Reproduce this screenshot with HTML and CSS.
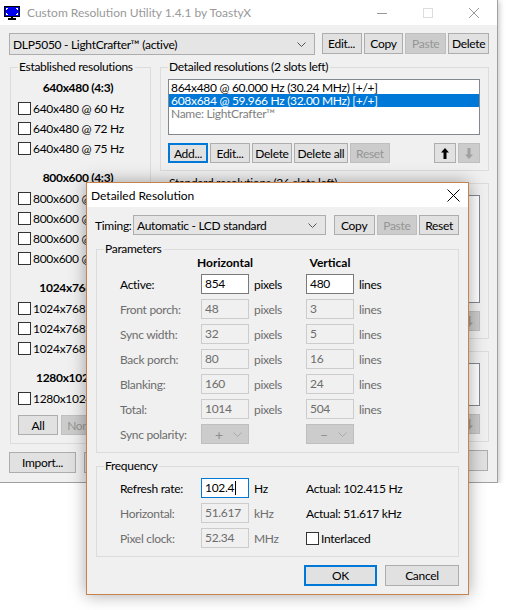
FILE: index.html
```html
<!DOCTYPE html>
<html lang="en">
<head>
    <meta charset="UTF-8">
    <meta name="viewport" content="width=device-width, initial-scale=1.0">
    <title>Custom Resolution Utility</title>
    <link rel="stylesheet" href="styles.css">
</head>
<body>

<div class="main-window">
    <div class="titlebar">
        <svg class="app-icon" width="16" height="14" viewBox="0 0 16 14">
            <rect x="0.5" y="0.5" width="15" height="10" fill="#0000f0" stroke="#000"/>
            <path d="M2 2.5h2M2.5 2v2M14 2.5h-2M13.5 2v2M2 8.5h2M2.5 7v2M14 8.5h-2M13.5 7v2" stroke="#fff"/>
            <rect x="7" y="11" width="2" height="1" fill="#000"/>
            <rect x="4" y="12" width="8" height="2" fill="#000"/>
        </svg>
        <span class="title">Custom Resolution Utility 1.4.1 by ToastyX</span>
        <div class="caption-buttons">
            <span class="caption-btn"><svg width="10" height="10"><path d="M0 5.5h10" stroke="#999"/></svg></span>
            <span class="caption-btn"><svg width="10" height="10"><rect x="0.5" y="0.5" width="9" height="9" fill="none" stroke="#ddd"/></svg></span>
            <span class="caption-btn"><svg width="10" height="10"><path d="M0 0l10 10M10 0l-10 10" stroke="#999"/></svg></span>
        </div>
    </div>

    <div class="window-body">
        <div class="toolbar">
            <div class="combo monitor-combo">
                <span>DLP5050 - LightCrafter™ (active)</span>
                <svg width="9" height="5"><path d="M0.5 0.5l4 4 4-4" fill="none" stroke="#555"/></svg>
            </div>
            <button class="btn w40">Edit...</button>
            <button class="btn w40">Copy</button>
            <button class="btn w41" disabled>Paste</button>
            <button class="btn w41">Delete</button>
        </div>

        <div class="columns">
            <div class="left-col">
                <fieldset class="group established">
                    <legend>Established resolutions</legend>
                    <div class="res-group">
                        <div class="res-head">640x480 (4:3)</div>
                        <div class="check"><span class="box"></span>640x480 @ 60 Hz</div>
                        <div class="check"><span class="box"></span>640x480 @ 72 Hz</div>
                        <div class="check"><span class="box"></span>640x480 @ 75 Hz</div>
                    </div>
                    <div class="res-group">
                        <div class="res-head">800x600 (4:3)</div>
                        <div class="check"><span class="box"></span>800x600 @ 56 Hz</div>
                        <div class="check"><span class="box"></span>800x600 @ 60 Hz</div>
                        <div class="check"><span class="box"></span>800x600 @ 72 Hz</div>
                        <div class="check"><span class="box"></span>800x600 @ 75 Hz</div>
                    </div>
                    <div class="res-group">
                        <div class="res-head">1024x768 (4:3)</div>
                        <div class="check"><span class="box"></span>1024x768 @ 60 Hz</div>
                        <div class="check"><span class="box"></span>1024x768 @ 70 Hz</div>
                        <div class="check"><span class="box"></span>1024x768 @ 75 Hz</div>
                    </div>
                    <div class="res-group">
                        <div class="res-head">1280x1024 (5:4)</div>
                        <div class="check"><span class="box"></span>1280x1024 @ 75 Hz</div>
                    </div>
                    <div class="button-row">
                        <button class="btn w40">All</button>
                        <button class="btn w40" disabled>None</button>
                    </div>
                </fieldset>
                <div class="bottom-row">
                    <button class="btn wide">Import...</button>
                    <button class="btn wide"></button>
                </div>
            </div>

            <div class="right-col">
                <fieldset class="group">
                    <legend>Detailed resolutions (2 slots left)</legend>
                    <div class="listbox detailed-list">
                        <div class="item">864x480 @ 60.000 Hz (30.24 MHz) [+/+]</div>
                        <div class="item selected">608x684 @ 59.966 Hz (32.00 MHz) [+/+]</div>
                        <div class="item muted">Name: LightCrafter™</div>
                    </div>
                    <div class="list-buttons">
                        <button class="btn w40 focused">Add...</button>
                        <button class="btn w40">Edit...</button>
                        <button class="btn w40">Delete</button>
                        <button class="btn w54">Delete all</button>
                        <button class="btn w40" disabled>Reset</button>
                        <span class="spacer"></span>
                        <button class="btn arrow"><svg width="8" height="11" viewBox="0 0 8 11"><path d="M4 0L8 4.5H5.5V11H2.5V4.5H0Z" fill="#000"/></svg></button>
                        <button class="btn arrow" disabled><svg width="8" height="11" viewBox="0 0 8 11"><path d="M4 11L8 6.5H5.5V0H2.5V6.5H0Z" fill="#a0a0a0"/></svg></button>
                    </div>
                </fieldset>

                <!-- mostly covered by the dialog -->
                <fieldset class="group">
                    <legend>Standard resolutions (26 slots left)</legend>
                    <div class="listbox standard-list"></div>
                    <div class="list-buttons">
                        <span class="spacer"></span>
                        <button class="btn arrow" disabled><svg width="8" height="11" viewBox="0 0 8 11"><path d="M4 0L8 4.5H5.5V11H2.5V4.5H0Z" fill="#a0a0a0"/></svg></button>
                        <button class="btn arrow" disabled><svg width="8" height="11" viewBox="0 0 8 11"><path d="M4 11L8 6.5H5.5V0H2.5V6.5H0Z" fill="#a0a0a0"/></svg></button>
                    </div>
                </fieldset>

                <fieldset class="group">
                    <legend>&nbsp;</legend>
                    <div class="listbox extension-list"></div>
                    <div class="list-buttons">
                        <span class="spacer"></span>
                        <button class="btn arrow" disabled><svg width="8" height="11" viewBox="0 0 8 11"><path d="M4 0L8 4.5H5.5V11H2.5V4.5H0Z" fill="#a0a0a0"/></svg></button>
                        <button class="btn arrow" disabled><svg width="8" height="11" viewBox="0 0 8 11"><path d="M4 11L8 6.5H5.5V0H2.5V6.5H0Z" fill="#a0a0a0"/></svg></button>
                    </div>
                </fieldset>

                <div class="bottom-row end">
                    <button class="btn wide"></button>
                    <button class="btn wide"></button>
                </div>
            </div>
        </div>
    </div>
</div>

<div class="dialog">
    <div class="dialog-titlebar">
        <span class="dialog-title">Detailed Resolution</span>
        <svg class="dialog-close" width="13" height="13"><path d="M0.5 0.5l12 12M12.5 0.5l-12 12" stroke="#000"/></svg>
    </div>
    <div class="dialog-body">
        <div class="timing-row">
            <span class="timing-label">Timing:</span>
            <div class="combo timing-combo">
                <span>Automatic - LCD standard</span>
                <svg width="9" height="5"><path d="M0.5 0.5l4 4 4-4" fill="none" stroke="#555"/></svg>
            </div>
            <button class="btn w41">Copy</button>
            <button class="btn w41" disabled>Paste</button>
            <button class="btn w40">Reset</button>
        </div>

        <fieldset class="group params">
            <legend>Parameters</legend>
            <div class="param-grid">
                <span></span>
                <span class="col-head">Horizontal</span>
                <span></span>
                <span class="col-head">Vertical</span>
                <span></span>

                <span>Active:</span>
                <span class="field">854</span>
                <span class="unit">pixels</span>
                <span class="field">480</span>
                <span class="unit">lines</span>

                <span class="off">Front porch:</span>
                <span class="field disabled">48</span>
                <span class="unit off">pixels</span>
                <span class="field disabled">3</span>
                <span class="unit off">lines</span>

                <span class="off">Sync width:</span>
                <span class="field disabled">32</span>
                <span class="unit off">pixels</span>
                <span class="field disabled">5</span>
                <span class="unit off">lines</span>

                <span class="off">Back porch:</span>
                <span class="field disabled">80</span>
                <span class="unit off">pixels</span>
                <span class="field disabled">16</span>
                <span class="unit off">lines</span>

                <span class="off">Blanking:</span>
                <span class="field disabled">160</span>
                <span class="unit off">pixels</span>
                <span class="field disabled">24</span>
                <span class="unit off">lines</span>

                <span class="off">Total:</span>
                <span class="field disabled">1014</span>
                <span class="unit off">pixels</span>
                <span class="field disabled">504</span>
                <span class="unit off">lines</span>

                <span class="off">Sync polarity:</span>
                <span class="mini-combo"><span>+</span><svg width="9" height="5"><path d="M0.5 0.5l4 4 4-4" fill="none" stroke="#a8a8a8"/></svg></span>
                <span></span>
                <span class="mini-combo"><span>–</span><svg width="9" height="5"><path d="M0.5 0.5l4 4 4-4" fill="none" stroke="#a8a8a8"/></svg></span>
                <span></span>
            </div>
        </fieldset>

        <fieldset class="group frequency">
            <legend>Frequency</legend>
            <div class="param-grid">
                <span>Refresh rate:</span>
                <span class="field active">102.4<span class="caret"></span></span>
                <span class="unit">Hz</span>
                <span class="actual">Actual: 102.415 Hz</span>

                <span class="off">Horizontal:</span>
                <span class="field disabled">51.617</span>
                <span class="unit off">kHz</span>
                <span class="actual">Actual: 51.617 kHz</span>

                <span class="off">Pixel clock:</span>
                <span class="field disabled">52.34</span>
                <span class="unit off">MHz</span>
                <span class="actual check"><span class="box"></span>Interlaced</span>
            </div>
        </fieldset>

        <div class="dialog-buttons">
            <button class="btn w73 default">OK</button>
            <button class="btn w74">Cancel</button>
        </div>
    </div>
</div>

</body>
</html>
```

FILE: styles.css
```css
body {
    margin: 0;
    background-color: #ffffff;
    font-family: "Segoe UI", Lato, sans-serif;
    font-size: 12px;
    letter-spacing: -0.3px;
    color: #000;
}
button {
    font-family: inherit;
    font-size: inherit;
    letter-spacing: inherit;
}

/* main window */
.main-window {
    width: 498px;
    height: 483px;
    box-sizing: border-box;
    background-color: #f0f0f0;
    border-right: 1px solid #a0a0a0;
    border-bottom: 1px solid #a0a0a0;
    box-shadow: 1px 1px 6px rgba(0, 0, 0, 0.25);
}
.titlebar {
    height: 25px;
    background-color: #fff;
    display: flex;
    align-items: center;
}
.app-icon {
    margin-left: 4px;
    margin-right: 7px;
}
.title {
    color: #999;
    flex: 1;
    letter-spacing: 0;
}
.caption-buttons {
    display: flex;
}
.caption-btn {
    width: 46px;
    height: 25px;
    display: flex;
    align-items: center;
    justify-content: center;
}

.window-body {
    padding: 8px 8px 0 9px;
}
.toolbar {
    display: flex;
    gap: 2px;
    align-items: flex-start;
}
.combo {
    height: 22px;
    box-sizing: border-box;
    border: 1px solid #adadad;
    background-color: #e5e5e5;
    display: flex;
    align-items: center;
    justify-content: space-between;
    padding: 0 8px 0 3px;
}
.monitor-combo {
    width: 307px;
    margin-right: 5px;
}

/* buttons */
.btn {
    height: 21px;
    box-sizing: border-box;
    border: 1px solid #adadad;
    background-color: #e1e1e1;
    color: #000;
    padding: 0;
    text-align: center;
    line-height: 17px;
}
.btn:disabled {
    background-color: #cccccc;
    border-color: #bfbfbf;
    color: #959595;
}
.btn.focused {
    border: 2px solid #0078d7;
}
.w40 { width: 40px; }
.w41 { width: 41px; }
.w54 { width: 54px; }
.w73 { width: 73px; }
.w74 { width: 74px; }
.wide { width: 67px; }

/* group boxes */
.group {
    border: 1px solid #dcdcdc;
    margin: 0;
    padding: 4px 8px 7px 7px;
    min-width: 0;
}
.group legend {
    padding: 0 2px 0 1px;
    line-height: 16px;
}

.columns {
    display: flex;
    margin-top: 4px;
}
.left-col {
    width: 142px;
}
.established {
    width: 141px;
    box-sizing: border-box;
    margin-left: 1px;
    padding: 3px 6px 8px 7px;
}
.res-head {
    height: 20px;
    line-height: 20px;
    font-weight: bold;
    text-align: center;
    padding-right: 6px;
}
.res-group + .res-group {
    margin-top: 10px;
}
.check {
    display: flex;
    align-items: center;
    height: 20px;
    gap: 2px;
    white-space: nowrap;
}
.box {
    width: 13px;
    height: 13px;
    box-sizing: border-box;
    border: 1px solid #333;
    background-color: #fff;
    flex: none;
}
.button-row {
    display: flex;
    gap: 3px;
    margin-top: 7px;
}
.button-row .btn {
    height: 20px;
}
.bottom-row {
    display: flex;
    gap: 8px;
    margin-top: 8px;
}
.bottom-row.end {
    justify-content: flex-end;
    margin-right: 1px;
}

.right-col {
    width: 329px;
    margin-left: 9px;
}
.right-col .group + .group {
    margin-top: 4px;
}
.listbox {
    width: 312px;
    box-sizing: border-box;
    border: 1px solid #828790;
    background-color: #fff;
    padding: 1px 0;
}
.detailed-list { height: 56px; }
.standard-list { height: 108px; }
.extension-list { height: 43px; }
.item {
    height: 13px;
    line-height: 13px;
    padding-left: 2px;
    white-space: nowrap;
}
.item.selected {
    background-color: #0078d7;
    color: #fff;
}
.item.muted {
    color: #808080;
}
.list-buttons {
    display: flex;
    gap: 2px;
    margin-top: 8px;
}
.list-buttons .btn {
    height: 20px;
}
.spacer {
    flex: 1;
    height: 20px;
}
.btn.arrow {
    width: 22px;
    display: flex;
    align-items: center;
    justify-content: center;
}

/* dialog */
.dialog {
    position: absolute;
    left: 86px;
    top: 182px;
    width: 383px;
    box-sizing: border-box;
    border: 1px solid #c8834c;
    background-color: #f0f0f0;
    box-shadow: 0 0 16px rgba(0, 0, 0, 0.35);
}
.dialog-titlebar {
    height: 24px;
    background-color: #fff;
    display: flex;
    align-items: center;
    justify-content: space-between;
    padding: 0 8px 0 4px;
    letter-spacing: 0;
}
.dialog-body {
    padding: 8px 9px 8px 9px;
}
.timing-row {
    display: flex;
    align-items: center;
    gap: 2px;
    margin-left: -1px;
}
.timing-label {
    width: 36px;
}
.timing-combo {
    width: 194px;
    height: 20px;
    margin-right: 6px;
}
.timing-row .btn {
    height: 20px;
}
.params {
    margin-top: 6px;
    padding: 0 8px 8px 7px;
}
.frequency {
    margin-top: 5px;
    padding: 4px 8px 8px 7px;
}
.param-grid {
    display: grid;
    grid-template-columns: 81px 48px 57px 48px auto;
    grid-auto-rows: 20px;
    row-gap: 5px;
    align-items: center;
    margin-left: 16px;
    white-space: nowrap;
}
.params .param-grid {
    grid-template-rows: 14px;
    margin-top: -2px;
}
.col-head {
    font-weight: bold;
    justify-self: center;
    letter-spacing: 0;
}
.field {
    height: 20px;
    box-sizing: border-box;
    border: 1px solid #7a7a7a;
    background-color: #fff;
    padding: 0 3px;
    line-height: 18px;
    display: flex;
    align-items: center;
}
.field.disabled {
    border-color: #cccccc;
    background-color: #f0f0f0;
    color: #6d6d6d;
}
.field.active {
    border-color: #0078d7;
}
.caret {
    width: 1px;
    height: 14px;
    background-color: #000;
    margin-left: 1px;
}
.unit {
    padding-left: 5px;
}
.off {
    color: #6d6d6d;
}
.actual {
    grid-column: 4 / 6;
}
.mini-combo {
    height: 20px;
    box-sizing: border-box;
    border: 1px solid #bfbfbf;
    background-color: #cccccc;
    color: #8d8d8d;
    display: flex;
    align-items: center;
    justify-content: space-between;
    padding: 0 6px 0 13px;
    font-size: 14px;
}
.dialog-buttons {
    display: flex;
    justify-content: flex-end;
    gap: 8px;
    margin-top: 8px;
}
.btn.default {
    border: 2px solid #0078d7;
}
```
